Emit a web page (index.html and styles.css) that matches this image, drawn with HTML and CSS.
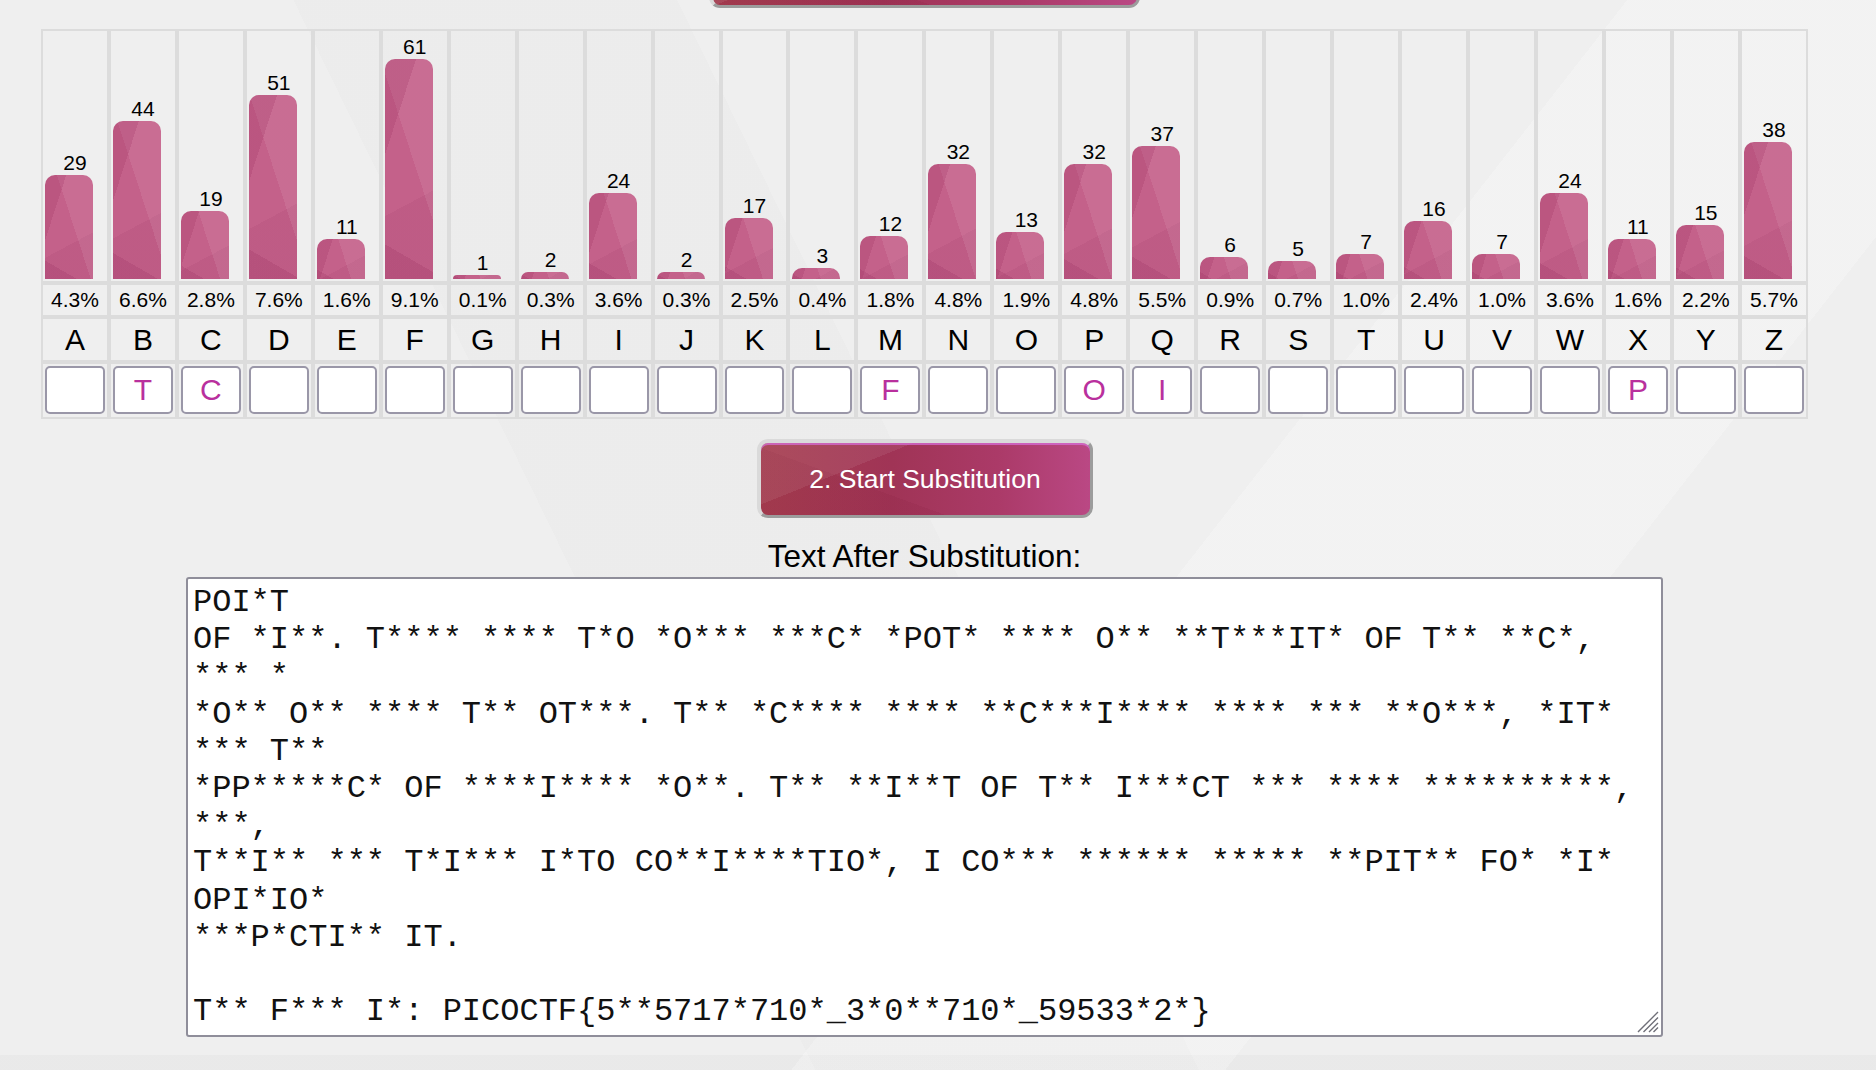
FILE: index.html
```html
<!DOCTYPE html>
<html lang="en">
<head>
<meta charset="utf-8">
<title>Substitution Cipher Helper</title>
<link rel="stylesheet" href="styles.css">
</head>
<body>
<main class="page">
  <button class="action action-top" type="button" aria-label="1. Frequency Analysis"></button>

  <table class="freq">
    <tr class="row-bars">
      <td><div class="stack"><div class="count">29</div><div class="bar" style="height:104.4px"></div></div></td>
      <td><div class="stack"><div class="count">44</div><div class="bar" style="height:158.4px"></div></div></td>
      <td><div class="stack"><div class="count">19</div><div class="bar" style="height:68.4px"></div></div></td>
      <td><div class="stack"><div class="count">51</div><div class="bar" style="height:183.6px"></div></div></td>
      <td><div class="stack"><div class="count">11</div><div class="bar" style="height:39.6px"></div></div></td>
      <td><div class="stack"><div class="count">61</div><div class="bar" style="height:219.6px"></div></div></td>
      <td><div class="stack"><div class="count">1</div><div class="bar" style="height:3.6px"></div></div></td>
      <td><div class="stack"><div class="count">2</div><div class="bar" style="height:7.2px"></div></div></td>
      <td><div class="stack"><div class="count">24</div><div class="bar" style="height:86.4px"></div></div></td>
      <td><div class="stack"><div class="count">2</div><div class="bar" style="height:7.2px"></div></div></td>
      <td><div class="stack"><div class="count">17</div><div class="bar" style="height:61.2px"></div></div></td>
      <td><div class="stack"><div class="count">3</div><div class="bar" style="height:10.8px"></div></div></td>
      <td><div class="stack"><div class="count">12</div><div class="bar" style="height:43.2px"></div></div></td>
      <td><div class="stack"><div class="count">32</div><div class="bar" style="height:115.2px"></div></div></td>
      <td><div class="stack"><div class="count">13</div><div class="bar" style="height:46.8px"></div></div></td>
      <td><div class="stack"><div class="count">32</div><div class="bar" style="height:115.2px"></div></div></td>
      <td><div class="stack"><div class="count">37</div><div class="bar" style="height:133.2px"></div></div></td>
      <td><div class="stack"><div class="count">6</div><div class="bar" style="height:21.6px"></div></div></td>
      <td><div class="stack"><div class="count">5</div><div class="bar" style="height:18px"></div></div></td>
      <td><div class="stack"><div class="count">7</div><div class="bar" style="height:25.2px"></div></div></td>
      <td><div class="stack"><div class="count">16</div><div class="bar" style="height:57.6px"></div></div></td>
      <td><div class="stack"><div class="count">7</div><div class="bar" style="height:25.2px"></div></div></td>
      <td><div class="stack"><div class="count">24</div><div class="bar" style="height:86.4px"></div></div></td>
      <td><div class="stack"><div class="count">11</div><div class="bar" style="height:39.6px"></div></div></td>
      <td><div class="stack"><div class="count">15</div><div class="bar" style="height:54px"></div></div></td>
      <td><div class="stack"><div class="count">38</div><div class="bar" style="height:136.8px"></div></div></td>
    </tr>
    <tr class="row-pct">
      <td>4.3%</td><td>6.6%</td><td>2.8%</td><td>7.6%</td><td>1.6%</td><td>9.1%</td><td>0.1%</td><td>0.3%</td><td>3.6%</td><td>0.3%</td><td>2.5%</td><td>0.4%</td><td>1.8%</td><td>4.8%</td><td>1.9%</td><td>4.8%</td><td>5.5%</td><td>0.9%</td><td>0.7%</td><td>1.0%</td><td>2.4%</td><td>1.0%</td><td>3.6%</td><td>1.6%</td><td>2.2%</td><td>5.7%</td>
    </tr>
    <tr class="row-letter">
      <td>A</td><td>B</td><td>C</td><td>D</td><td>E</td><td>F</td><td>G</td><td>H</td><td>I</td><td>J</td><td>K</td><td>L</td><td>M</td><td>N</td><td>O</td><td>P</td><td>Q</td><td>R</td><td>S</td><td>T</td><td>U</td><td>V</td><td>W</td><td>X</td><td>Y</td><td>Z</td>
    </tr>
    <tr class="row-input">
      <td><input class="sub" type="text" maxlength="1" value=""></td>
      <td><input class="sub" type="text" maxlength="1" value="T"></td>
      <td><input class="sub" type="text" maxlength="1" value="C"></td>
      <td><input class="sub" type="text" maxlength="1" value=""></td>
      <td><input class="sub" type="text" maxlength="1" value=""></td>
      <td><input class="sub" type="text" maxlength="1" value=""></td>
      <td><input class="sub" type="text" maxlength="1" value=""></td>
      <td><input class="sub" type="text" maxlength="1" value=""></td>
      <td><input class="sub" type="text" maxlength="1" value=""></td>
      <td><input class="sub" type="text" maxlength="1" value=""></td>
      <td><input class="sub" type="text" maxlength="1" value=""></td>
      <td><input class="sub" type="text" maxlength="1" value=""></td>
      <td><input class="sub" type="text" maxlength="1" value="F"></td>
      <td><input class="sub" type="text" maxlength="1" value=""></td>
      <td><input class="sub" type="text" maxlength="1" value=""></td>
      <td><input class="sub" type="text" maxlength="1" value="O"></td>
      <td><input class="sub" type="text" maxlength="1" value="I"></td>
      <td><input class="sub" type="text" maxlength="1" value=""></td>
      <td><input class="sub" type="text" maxlength="1" value=""></td>
      <td><input class="sub" type="text" maxlength="1" value=""></td>
      <td><input class="sub" type="text" maxlength="1" value=""></td>
      <td><input class="sub" type="text" maxlength="1" value=""></td>
      <td><input class="sub" type="text" maxlength="1" value=""></td>
      <td><input class="sub" type="text" maxlength="1" value="P"></td>
      <td><input class="sub" type="text" maxlength="1" value=""></td>
      <td><input class="sub" type="text" maxlength="1" value=""></td>
    </tr>
  </table>

  <button class="action" type="button">2. Start Substitution</button>

  <div class="heading">Text After Substitution:</div>

  <div class="output-wrap">
    <textarea class="output" spellcheck="false">POI*T
OF *I**. T**** **** T*O *O*** ***C* *POT* **** O** **T***IT* OF T** **C*, *** *
*O** O** **** T** OT***. T** *C**** **** **C***I**** **** *** **O***, *IT* *** T**
*PP*****C* OF ****I**** *O**. T** **I**T OF T** I***CT *** **** **********, ***,
T**I** *** T*I*** I*TO CO**I****TIO*, I CO*** ****** ***** **PIT** FO* *I* OPI*IO*
***P*CTI** IT.

T** F*** I*: PICOCTF{5**5717*710*_3*0**710*_59533*2*}</textarea>
    <svg class="grip" width="22" height="22" viewBox="0 0 22 22" aria-hidden="true">
      <path d="M21 1 L1 21 M21 6.5 L6.5 21 M21 12 L12 21 M21 16.5 L16.5 21" stroke="#6f6f78" stroke-width="1.4" fill="none"/>
    </svg>
  </div>
</main>
</body>
</html>
```

FILE: styles.css
```css
html, body {
  margin: 0;
  padding: 0;
}

body {
  width: 1876px;
  height: 1070px;
  overflow: hidden;
  font-family: "Liberation Sans", Arial, sans-serif;
  color: #000;
  background:
    linear-gradient(128deg, transparent 0 60%, rgba(255,255,255,0.22) 60% 76%, transparent 76%),
    linear-gradient(64deg, transparent 0 34%, rgba(0,0,0,0.012) 34% 50%, transparent 50%),
    linear-gradient(180deg, transparent 0 98.6%, rgba(0,0,0,0.025) 98.6%),
    #efefef;
}

.page {
  width: 1849px;
  display: flex;
  flex-direction: column;
  align-items: center;
}

/* buttons */
.action {
  box-sizing: border-box;
  width: 336px;
  height: 79px;
  margin-top: 20px;
  padding: 0;
  border-style: solid;
  border-width: 4px 3px 3px 4px;
  border-color: #dadada #9c9c9c #9c9c9c #dadada;
  border-radius: 11px;
  color: #fff;
  font-family: "Liberation Sans", Arial, sans-serif;
  font-size: 26.5px;
  cursor: pointer;
  box-shadow: inset 0 2px 0 rgba(214, 110, 214, 0.75);
  background:
    linear-gradient(158deg, rgba(255,255,255,0.07) 0 30%, transparent 30%),
    linear-gradient(20deg, rgba(120,20,50,0.10) 0 35%, transparent 35%),
    linear-gradient(90deg, #a63e50 0%, #a03456 40%, #ab3a68 72%, #ba4884 100%);
}

.action-top {
  width: 431px;
  margin-top: -71px;
}

/* frequency table */
.freq {
  width: 1767px;
  margin-top: 21px;
  border-collapse: separate;
  border-spacing: 0;
  table-layout: fixed;
}

.freq td {
  border: 2px solid #dcdcdc;
  padding: 0;
  text-align: center;
}

.row-bars td {
  padding: 2px;
  vertical-align: bottom;
}

.stack {
  height: 246px;
  display: flex;
  flex-direction: column;
  justify-content: flex-end;
}

.count {
  font-size: 21px;
  line-height: 24px;
  text-align: center;
}

.bar {
  width: 48px;
  border-radius: 10px 10px 0 0;
  background:
    linear-gradient(108deg, rgba(150,40,90,0.20) 0 26%, transparent 26%),
    linear-gradient(72deg, transparent 0 56%, rgba(255,255,255,0.08) 56%),
    linear-gradient(152deg, transparent 0 64%, rgba(120,20,70,0.07) 64%),
    linear-gradient(30deg, rgba(130,20,70,0.14) 0 14%, transparent 14%),
    #c4618a;
}

.row-pct td {
  font-size: 21px;
  line-height: 30px;
}

.row-letter td {
  font-size: 30px;
  line-height: 41px;
}

.row-input td {
  padding: 2px 2px 3px;
}

.sub {
  display: block;
  box-sizing: border-box;
  width: 100%;
  height: 48px;
  margin: 0;
  padding: 0;
  border: 2px solid #9a97a8;
  border-radius: 5px;
  background: #fff;
  color: #b9309d;
  font-family: "Liberation Sans", Arial, sans-serif;
  font-size: 30px;
  text-align: center;
  outline: none;
}

/* output */
.heading {
  margin-top: 20px;
  margin-bottom: 3px;
  font-size: 31.5px;
  line-height: 36px;
}

.output-wrap {
  position: relative;
  width: 1477px;
  height: 460px;
}

.output {
  display: block;
  box-sizing: border-box;
  width: 1477px;
  height: 460px;
  margin: 0;
  padding: 5px;
  border: 2px solid #8f8e9a;
  border-radius: 3px;
  background: #fff;
  color: #111;
  font-family: "Liberation Mono", "Courier New", monospace;
  font-size: 32px;
  line-height: 37.2px;
  overflow: hidden;
  resize: none;
  outline: none;
}

.grip {
  position: absolute;
  right: 4px;
  bottom: 4px;
}
```
